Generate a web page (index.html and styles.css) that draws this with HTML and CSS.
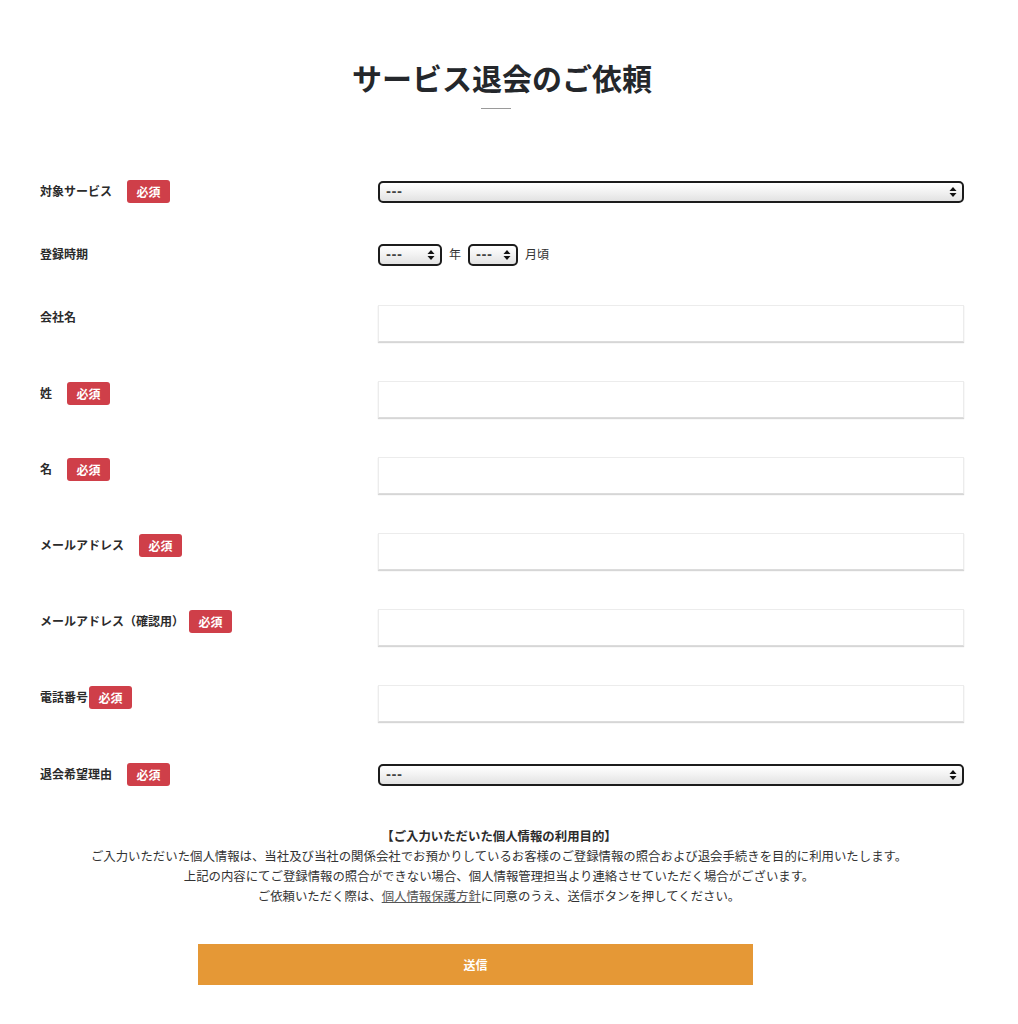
FILE: index.html
```html
<!DOCTYPE html>
<html lang="ja">
<head>
<meta charset="utf-8">
<title>サービス退会のご依頼</title>
<link rel="stylesheet" href="styles.css">
</head>
<body>
<div class="page">
  <h1 class="title">サービス退会のご依頼</h1>
  <div class="divider"></div>

  <form class="form">
    <div class="row row-select">
      <div class="label"><span class="label-text">対象サービス</span><span class="badge">必須</span></div>
      <div class="field">
        <span class="select select-full"><span class="select-value">---</span>
          <svg class="arrows" width="8" height="12" viewBox="0 0 8 12"><path d="M4 1 L7.5 5 H0.5 Z M4 11 L7.5 7 H0.5 Z" fill="#111"/></svg>
        </span>
      </div>
    </div>

    <div class="row row-select">
      <div class="label"><span class="label-text">登録時期</span></div>
      <div class="field date">
        <span class="select select-year"><span class="select-value">---</span>
          <svg class="arrows" width="8" height="12" viewBox="0 0 8 12"><path d="M4 1 L7.5 5 H0.5 Z M4 11 L7.5 7 H0.5 Z" fill="#111"/></svg>
        </span>
        <span class="unit">年</span>
        <span class="select select-month"><span class="select-value">---</span>
          <svg class="arrows" width="8" height="12" viewBox="0 0 8 12"><path d="M4 1 L7.5 5 H0.5 Z M4 11 L7.5 7 H0.5 Z" fill="#111"/></svg>
        </span>
        <span class="unit">月頃</span>
      </div>
    </div>

    <div class="row">
      <div class="label"><span class="label-text">会社名</span></div>
      <div class="field"><input class="input" type="text"></div>
    </div>

    <div class="row">
      <div class="label"><span class="label-text">姓</span><span class="badge">必須</span></div>
      <div class="field"><input class="input" type="text"></div>
    </div>

    <div class="row">
      <div class="label"><span class="label-text">名</span><span class="badge">必須</span></div>
      <div class="field"><input class="input" type="text"></div>
    </div>

    <div class="row">
      <div class="label"><span class="label-text">メールアドレス</span><span class="badge">必須</span></div>
      <div class="field"><input class="input" type="text"></div>
    </div>

    <div class="row">
      <div class="label"><span class="label-text">メールアドレス（確認用）</span><span class="badge badge-near">必須</span></div>
      <div class="field"><input class="input" type="text"></div>
    </div>

    <div class="row">
      <div class="label"><span class="label-text">電話番号</span><span class="badge badge-tight">必須</span></div>
      <div class="field"><input class="input" type="text"></div>
    </div>

    <div class="row row-select row-reason">
      <div class="label"><span class="label-text">退会希望理由</span><span class="badge">必須</span></div>
      <div class="field">
        <span class="select select-full"><span class="select-value">---</span>
          <svg class="arrows" width="8" height="12" viewBox="0 0 8 12"><path d="M4 1 L7.5 5 H0.5 Z M4 11 L7.5 7 H0.5 Z" fill="#111"/></svg>
        </span>
      </div>
    </div>

    <div class="notice">
      <p class="notice-title">【ご入力いただいた個人情報の利用目的】</p>
      <p>ご入力いただいた個人情報は、当社及び当社の関係会社でお預かりしているお客様のご登録情報の照合および退会手続きを目的に利用いたします。</p>
      <p>上記の内容にてご登録情報の照合ができない場合、個人情報管理担当より連絡させていただく場合がございます。</p>
      <p>ご依頼いただく際は、<a class="link" href="#">個人情報保護方針</a>に同意のうえ、送信ボタンを押してください。</p>
    </div>

    <div class="actions">
      <button class="submit" type="button">送信</button>
    </div>
  </form>
</div>
</body>
</html>
```

FILE: styles.css
```css
* { box-sizing: border-box; }

body {
  margin: 0;
  background: #fff;
  font-family: "Noto Sans CJK JP", "Noto Sans", sans-serif;
  color: #333;
}

.page {
  width: 924px;
  margin-left: 40px;
  padding-top: 55px;
  padding-bottom: 40px;
}

.title {
  margin: 0;
  text-align: center;
  font-size: 30px;
  line-height: 45px;
  font-weight: 700;
  color: #24272b;
}

.divider {
  width: 30px;
  height: 1px;
  background: #9a9a9a;
  margin: 8px auto 0;
  position: relative;
  left: -6px;
}

.form {
  margin-top: 71px;
  display: flex;
  flex-direction: column;
}

.row {
  display: flex;
  align-items: flex-start;
  margin-bottom: 39px;
}

.row-select {
  align-items: center;
}

.row-reason {
  margin-top: 2px;
  margin-bottom: 40px;
}

.row:first-child {
  margin-bottom: 40px;
}

.label {
  width: 338px;
  flex: none;
  display: flex;
  align-items: center;
  height: 23px;
  margin-top: 1px;
}

.row-select .label {
  margin-top: 0;
}

.label-text {
  font-size: 12px;
  font-weight: 700;
  color: #2b2b2b;
  line-height: 1;
  position: relative;
  top: -1px;
}

.badge {
  display: inline-flex;
  align-items: center;
  justify-content: center;
  width: 43px;
  height: 23px;
  margin-left: 15px;
  background: #cf3f49;
  color: #fff;
  font-size: 12px;
  font-weight: 700;
  border-radius: 3px;
}

.badge-near { margin-left: 5px; }
.badge-tight { margin-left: 1px; }

.field {
  flex: 1;
  display: flex;
  align-items: center;
}

.select {
  position: relative;
  display: inline-flex;
  align-items: center;
  height: 22px;
  border: 2px solid #1c1c1c;
  border-radius: 5px;
  background: linear-gradient(#ffffff, #f3f3f3 45%, #e2e2e2);
  padding-left: 6px;
}

.select-full { width: 586px; }
.select-year { width: 64px; }
.select-month { width: 50px; }

.select-value {
  font-family: "DejaVu Sans", sans-serif;
  font-size: 12px;
  font-weight: 700;
  color: #444;
  letter-spacing: 0.5px;
  line-height: 1;
}

.arrows {
  position: absolute;
  right: 5px;
  top: 3px;
}

.unit {
  font-size: 12px;
  color: #333;
  margin: 0 7px;
  position: relative;
  top: -1px;
}

.input {
  display: block;
  width: 586px;
  height: 37px;
  margin: 0;
  border: 1px solid #ececec;
  border-bottom: 1px solid #dcdcdc;
  box-shadow: 0 1px 1px #d6d6d6;
  border-radius: 0;
  background: #fff;
  outline: none;
}

.notice {
  text-align: center;
  font-size: 12.4px;
  line-height: 20px;
  color: #333;
  position: relative;
  left: -3px;
  width: 924px;
}

.notice p {
  margin: 0;
}

.notice-title {
  font-weight: 700;
  color: #2b2b2b;
}

.link {
  color: #555;
  text-decoration: underline;
}

.actions {
  margin-top: 38px;
  padding-left: 158px;
}

.submit {
  display: block;
  width: 555px;
  height: 41px;
  border: none;
  background: #e59836;
  color: #fff;
  font-family: "Noto Sans CJK JP", sans-serif;
  font-size: 12px;
  font-weight: 700;
  cursor: pointer;
}
```
